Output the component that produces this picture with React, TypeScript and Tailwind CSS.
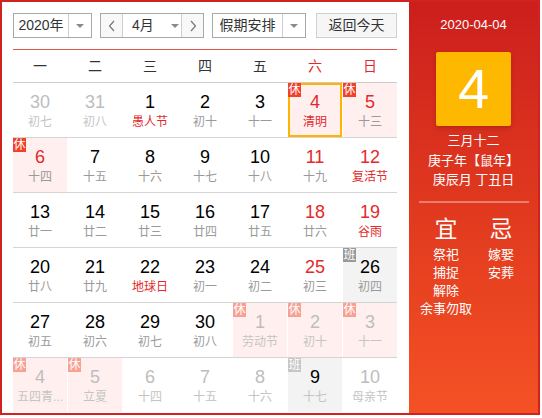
import React from 'react'

type Day = {
  n: number
  sub: string
  other?: boolean
  red?: boolean
  fest?: boolean
  rest?: boolean
  work?: boolean
  today?: boolean
}

const WEEK = ['一', '二', '三', '四', '五', '六', '日']

const DAYS: Day[] = [
  { n: 30, sub: '初七', other: true },
  { n: 31, sub: '初八', other: true },
  { n: 1, sub: '愚人节', fest: true },
  { n: 2, sub: '初十' },
  { n: 3, sub: '十一' },
  { n: 4, sub: '清明', red: true, fest: true, rest: true, today: true },
  { n: 5, sub: '十三', red: true, rest: true },

  { n: 6, sub: '十四', red: true, rest: true },
  { n: 7, sub: '十五' },
  { n: 8, sub: '十六' },
  { n: 9, sub: '十七' },
  { n: 10, sub: '十八' },
  { n: 11, sub: '十九', red: true },
  { n: 12, sub: '复活节', red: true, fest: true },

  { n: 13, sub: '廿一' },
  { n: 14, sub: '廿二' },
  { n: 15, sub: '廿三' },
  { n: 16, sub: '廿四' },
  { n: 17, sub: '廿五' },
  { n: 18, sub: '廿六', red: true },
  { n: 19, sub: '谷雨', red: true, fest: true },

  { n: 20, sub: '廿八' },
  { n: 21, sub: '廿九' },
  { n: 22, sub: '地球日', fest: true },
  { n: 23, sub: '初一' },
  { n: 24, sub: '初二' },
  { n: 25, sub: '初三', red: true },
  { n: 26, sub: '初四', work: true },

  { n: 27, sub: '初五' },
  { n: 28, sub: '初六' },
  { n: 29, sub: '初七' },
  { n: 30, sub: '初八' },
  { n: 1, sub: '劳动节', other: true, rest: true },
  { n: 2, sub: '初十', other: true, rest: true },
  { n: 3, sub: '十一', other: true, rest: true },

  { n: 4, sub: '五四青年节', other: true, rest: true },
  { n: 5, sub: '立夏', other: true, rest: true },
  { n: 6, sub: '十四', other: true },
  { n: 7, sub: '十五', other: true },
  { n: 8, sub: '十六', other: true },
  { n: 9, sub: '十七', other: true, work: true },
  { n: 10, sub: '母亲节', other: true },
]

function Caret() {
  return <span className="block w-0 h-0 border-x-[4px] border-x-transparent border-t-[4px] border-t-[#8a8a8a]" />
}

function Cell({ d, last }: { d: Day; last: boolean }) {
  const bg = d.rest ? 'bg-[#fff0ef]' : d.work ? 'bg-[#f3f3f3]' : 'bg-white'
  const numColor = d.other && !d.work ? 'text-[#bdbdbd]' : d.red ? 'text-[#e3292b]' : 'text-black'
  const subColor = d.other ? 'text-[#c4c4c4]' : d.fest ? 'text-[#e3292b]' : 'text-[#9a9a9a]'
  return (
    <div className={`relative h-[54px] flex flex-col items-center pt-[8px] ${bg} ${d.today ? 'border-2 border-[#ffb400]' : ''}`}>
      {d.rest && (
        <span
          className={`absolute ${d.today ? '-left-[2px] -top-[2px]' : 'left-0 top-0'} w-[13px] h-[14px] text-[12px] leading-[14px] text-white text-center ${d.other ? 'bg-[#f8a093]' : 'bg-[#f2402b]'}`}
        >
          休
        </span>
      )}
      {d.work && (
        <span
          className={`absolute left-0 top-0 w-[13px] h-[14px] text-[12px] leading-[14px] text-white text-center ${d.other ? 'bg-[#c6c6c6]' : 'bg-[#999999]'}`}
        >
          班
        </span>
      )}
      <span className={`text-[18px] leading-[22px] ${numColor} ${d.today ? '-mt-[2px]' : ''}`}>{d.n}</span>
      <span className={`mt-px text-[12px] leading-[16px] max-w-[50px] truncate ${subColor}`}>
        {d.sub.length > 4 ? '五四青...' : d.sub}
      </span>
      {!last && null}
    </div>
  )
}

export default function App() {
  const rows: Day[][] = []
  for (let i = 0; i < DAYS.length; i += 7) rows.push(DAYS.slice(i, i + 7))

  return (
    <div
      className="w-[540px] h-[415px] border-2 border-[#d0221f] flex bg-white text-[#333]"
      style={{ fontFamily: '"Liberation Sans", "Noto Sans CJK SC", sans-serif' }}
    >
      {/* 왼쪽 달력 */}
      <div className="w-[407px] shrink-0 pl-[11px] pr-[12px] pt-[11px] flex flex-col">
        <div className="flex items-center h-[25px] text-[14px] text-[#333]">
          <div className="w-[79px] h-full border border-[#a8a8a8] flex">
            <span className="w-[55px] flex items-center justify-center border-r border-[#cfcfcf]">2020年</span>
            <span className="flex-1 flex items-center justify-center"><Caret /></span>
          </div>
          <div className="ml-[8px] w-[104px] h-full border border-[#a8a8a8] flex">
            <span className="w-[22px] flex items-center justify-center border-r border-[#cfcfcf] bg-[#f8f8f8]">
              <svg width="8" height="12" viewBox="0 0 8 12" fill="none" stroke="#777" strokeWidth="1.2"><path d="M6 1 L1.5 6 L6 11" /></svg>
            </span>
            <span className="w-[59px] flex items-center border-r border-[#cfcfcf] pl-[9px]">
              <span>4月</span>
              <span className="ml-[17px]"><Caret /></span>
            </span>
            <span className="flex-1 flex items-center justify-center bg-[#f8f8f8]">
              <svg width="8" height="12" viewBox="0 0 8 12" fill="none" stroke="#777" strokeWidth="1.2"><path d="M2 1 L6.5 6 L2 11" /></svg>
            </span>
          </div>
          <div className="ml-[8px] w-[94px] h-full border border-[#a8a8a8] flex">
            <span className="w-[70px] flex items-center justify-center border-r border-[#cfcfcf]">假期安排</span>
            <span className="flex-1 flex items-center justify-center"><Caret /></span>
          </div>
          <button className="ml-[10px] w-[81px] h-full border border-[#d0d0d0] bg-[#f6f6f6] flex items-center justify-center text-[14px] text-[#333]">
            返回今天
          </button>
        </div>

        <div className="mt-[11px] h-px bg-[#e5534b]" />

        <div className="grid grid-cols-7 gap-x-px h-[33px] items-center text-[14px] border-b border-[#cccccc]">
          {WEEK.map((w, i) => (
            <span key={w} className={`text-center ${i >= 5 ? 'text-[#e3292b]' : 'text-[#333]'}`}>{w}</span>
          ))}
        </div>

        {rows.map((r, ri) => (
          <div
            key={ri}
            className={`grid grid-cols-7 gap-x-px ${ri < rows.length - 1 ? 'border-b border-[#d4d4d4]' : ''}`}
          >
            {r.map((d, i) => (
              <Cell key={i} d={d} last={ri === rows.length - 1} />
            ))}
          </div>
        ))}
      </div>

      {/* 오른쪽 상세 패널 */}
      <div className="flex-1 bg-gradient-to-b from-[#cc1e1d] via-[#e0391f] to-[#f55125] flex flex-col items-center text-white">
        <div className="mt-[14px] text-[13px] leading-[18px]">2020-04-04</div>
        <div className="mt-[18px] w-[75px] h-[74px] bg-[#ffb800] rounded-[2px] shadow-[0_2px_4px_rgba(120,20,0,0.35)] flex items-center justify-center text-[56px] leading-none">
          4
        </div>
        <div className="mt-[5px] text-[13px] leading-[19.5px] text-center">
          <div>三月十二</div>
          <div>庚子年【鼠年】</div>
          <div>庚辰月 丁丑日</div>
        </div>
        <div className="mt-[11px] w-[110px] h-[2px] bg-white/35" />
        <div className="mt-[12px] w-[110px] grid grid-cols-2 text-center">
          <div className="flex flex-col items-center">
            <span className="text-[23px] leading-[28px]">宜</span>
            <span className="mt-[3px] text-[13px] leading-[18px]">祭祀</span>
            <span className="text-[13px] leading-[18px]">捕捉</span>
            <span className="text-[13px] leading-[18px]">解除</span>
            <span className="text-[13px] leading-[18px] whitespace-nowrap">余事勿取</span>
          </div>
          <div className="flex flex-col items-center">
            <span className="text-[23px] leading-[28px]">忌</span>
            <span className="mt-[3px] text-[13px] leading-[18px]">嫁娶</span>
            <span className="text-[13px] leading-[18px]">安葬</span>
          </div>
        </div>
      </div>
    </div>
  )
}
